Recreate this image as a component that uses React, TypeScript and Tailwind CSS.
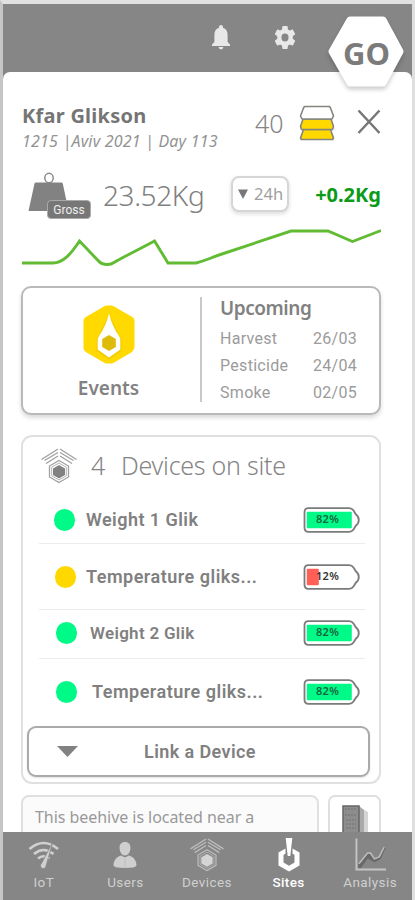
import type { ReactNode } from 'react';

interface Device {
  id: number;
  name: string;
  battery: number;
  dotClass: string;
  rowClass: string;
  nameClass: string;
}

interface NavItem {
  label: string;
  icon: ReactNode;
  active?: boolean;
}

const devices: Device[] = [
  {
    id: 1,
    name: 'Weight 1 Glik',
    battery: 82,
    dotClass: 'ml-[15px] bg-[#00fa87]',
    rowClass: 'h-[50px] border-b pt-[2px]',
    nameClass: 'ml-[11px] text-[18px] tracking-[0.45px]',
  },
  {
    id: 2,
    name: 'Temperature gliks...',
    battery: 12,
    dotClass: 'ml-4 bg-[#ffd800]',
    rowClass: 'h-[66px] border-b',
    nameClass: 'ml-[10px] text-[18px] tracking-[0.5px]',
  },
  {
    id: 3,
    name: 'Weight 2 Glik',
    battery: 82,
    dotClass: 'ml-[17px] bg-[#00fa87]',
    rowClass: 'h-[49px] border-b pb-[2px]',
    nameClass: 'ml-[13px] text-[17px] tracking-[0.3px]',
  },
  {
    id: 4,
    name: 'Temperature gliks...',
    battery: 82,
    dotClass: 'ml-[17px] bg-[#00fa87]',
    rowClass: 'h-[67px] pb-[2px]',
    nameClass: 'ml-[15px] text-[18px] tracking-[0.5px]',
  },
];

const upcoming = [
  { label: 'Harvest', date: '26/03' },
  { label: 'Pesticide', date: '24/04' },
  { label: 'Smoke', date: '02/05' },
];

function BellIcon() {
  return (
    <svg width="20" height="26" viewBox="0 0 20 26" fill="#e8e8e8">
      <path d="M10 1c1.200 0 2 .9 2 2v.7c3 .9 4.600 3.600 4.600 7V18l2.400 2.500V22H1v-1.500L3.400 18v-7.300c0-3.400 1.600-6.100 4.600-7V3c0-1.100.8-2 2-2Z" />
      <path d="M7.700 23h4.600c0 1.400-1 2.300-2.300 2.300S7.700 24.400 7.700 23Z" />
    </svg>
  );
}

function GearIcon() {
  return (
    <svg width="26" height="29" viewBox="0 0 24 24" preserveAspectRatio="none" fill="#e8e8e8">
      <path d="M19.140 12.940c.04-.3.060-.61.060-.94 0-.32-.02-.64-.070-.94l2.030-1.580c.18-.14.23-.41.120-.61l-1.920-3.320c-.12-.22-.37-.29-.59-.22l-2.390.96c-.5-.38-1.030-.7-1.620-.94l-.36-2.540c-.04-.24-.24-.41-.48-.41h-3.840c-.24 0-.43.17-.47.41l-.36 2.540c-.59.24-1.130.57-1.620.94l-2.390-.96c-.22-.08-.47 0-.59.22L2.740 8.870c-.12.21-.08.47.12.61l2.030 1.580c-.05.3-.09.63-.09.94s.02.64.070.94l-2.030 1.580c-.18.14-.23.41-.12.61l1.920 3.320c.12.22.37.29.59.22l2.390-.96c.5.38 1.030.7 1.620.94l.36 2.540c.05.24.24.41.48.41h3.840c.24 0 .44-.17.47-.41l.36-2.540c.59-.24 1.130-.56 1.620-.94l2.390.96c.22.08.47 0 .59-.22l1.920-3.320c.12-.22.070-.47-.12-.61l-2.010-1.580ZM12 15.300A3.300 3.300 0 1 1 12 8.700a3.300 3.300 0 0 1 0 6.600Z" />
    </svg>
  );
}

function HiveIcon() {
  return (
    <svg width="36" height="36" viewBox="0 0 36 36" stroke="#858580" strokeWidth="1.600" strokeLinejoin="round">
      <path d="M4.500 24.500h27l3 8.500-.8 1.500H2.300L1.500 33Z" fill="#ffd800" />
      <path d="M4 14h28l2.500 7.500-1 3h-31l-1-3Z" fill="#ffd800" />
      <path d="M5.500 1.500h25L31.500 3l3 8-1.500 3H3l-1.500-3 3-8Z" fill="#fff" />
    </svg>
  );
}

function CloseIcon() {
  return (
    <svg width="24" height="26" viewBox="0 0 24 26" stroke="#777" strokeWidth="2.500">
      <path d="M1.500 1.500 22.500 24M22.500 1.500 1.500 24" />
    </svg>
  );
}

function WeightIcon() {
  return (
    <svg width="40" height="40" viewBox="0 0 40 40">
      <ellipse cx="21" cy="6" rx="4.200" ry="4.700" fill="none" stroke="#8b8b8b" strokeWidth="1.500" />
      <path d="M8 10.500h25q1.500 0 1.800 1L40.500 39H.5l6-27.500q.2-1 1.500-1Z" fill="#828282" />
    </svg>
  );
}

function WeightChart() {
  return (
    <svg width="359" height="44" viewBox="0 0 359 44" fill="none" stroke="#61bc34" strokeWidth="2.900">
      <path d="M0 37h31c10 0 18-9 26.500-22L76 34.500c4 5 12 5 16 2 10-6 23-12 40.500-21.500l13.500 22H174C184 34.500 188 32 200 28L269 5h37l24.500 10.500L359 4.500" />
    </svg>
  );
}

function EventsIcon() {
  return (
    <svg width="54" height="62" viewBox="0 0 54 62">
      <path
        d="M25 6h4L48 17v4 22l-1 1.500L29 55h-4L6 44V17Z"
        fill="#ffd900"
        stroke="#ffd900"
        strokeWidth="9"
        strokeLinejoin="round"
      />
      <path d="M27 10 39.500 36V47L27 56 14.500 47V36Z" fill="#d9b600" opacity=".35" />
      <path
        d="M27 9.500Q30 22 37 32q1.300 2 1.300 4v9.500L27 53.500 15.700 45.500V36q0-2 1.300-4Q24 22 27 9.500Z"
        fill="#fff"
      />
      <path d="M27 31 33.800 35v8L27 47l-6.800-4v-8Z" fill="#dfbb09" />
    </svg>
  );
}

function SensorIcon({ color, core, size = 'h-9 w-9' }: { color: string; core: string; size?: string }) {
  return (
    <svg className={size} viewBox="0 0 36 36" fill="none" stroke={color} strokeWidth="1.300">
      <path d="M.5 11.500 17 1M3.500 12.500 17 4.500M5 15.500 17 8M19 1l16.500 10.500M19 4.500l13.500 8M19 8l12 7.500" />
      <path d="M18 12.500 27.500 18v11L18 34.500 8.500 29V18Z" />
      <path d="M18 15 25.300 19.200v8.600L18 32l-7.300-4.200v-8.600Z" strokeWidth=".8" />
      <path d="M18 17 24 20.500v6.600L18 30.500l-6-3.400v-6.600Z" fill={core} stroke="none" />
    </svg>
  );
}

function Battery({ level }: { level: number }) {
  const low = level < 20;
  return (
    <div className="relative h-[26px] w-[57px]">
      <svg width="57" height="26" viewBox="0 0 57 26" fill="none">
        <path
          d="M5.500 1.200H46q3 0 4.500 2.300l2.500 4q2.800 2 2.800 5.500t-2.800 5.500l-2.500 4q-1.500 2.300-4.500 2.300H5.500q-4 0-4-4v-15.600q0-4 4-4Z"
          fill="#fff"
          stroke="#7b7b7b"
          strokeWidth="1.800"
        />
        <rect x="3.800" y="4.800" width={low ? 12 : 45} height="16.500" rx="1" fill={low ? '#ff5f55' : '#00fa87'} />
      </svg>
      <span
        className={`absolute top-[5px] left-[13px] font-['Noto_Sans'] text-[11px] leading-[13px] font-semibold tracking-[0.3px] ${
          low ? 'text-[#333]' : 'text-[#17643f]'
        }`}
      >
        {level}%
      </span>
    </div>
  );
}

function DeviceRow({ device }: { device: Device }) {
  return (
    <div className={`mr-[9px] ml-[11px] flex shrink-0 items-center border-[#ececec] ${device.rowClass}`}>
      <span className={`h-[22px] w-[21px] shrink-0 rounded-full ${device.dotClass}`} />
      <span className={`leading-6 font-semibold whitespace-nowrap text-[#808080] ${device.nameClass}`}>
        {device.name}
      </span>
      <div className="mr-[5px] ml-auto">
        <Battery level={device.battery} />
      </div>
    </div>
  );
}

const navItems: NavItem[] = [
  {
    label: 'IoT',
    icon: (
      <svg width="32" height="30" viewBox="0 0 32 30" fill="none" stroke="#d0d0d0" strokeWidth="2.600">
        <path d="M1.500 9Q15.500-3 30 9M6 14q9.500-8 19.500 0M10 18.500q5.500-4.500 11.500 0" />
        <path d="M25 1.500 13.500 23.500a2.800 2.800 0 1 0 4.500 2.500Z" fill="#d0d0d0" stroke="#868686" strokeWidth=".8" />
      </svg>
    ),
  },
  {
    label: 'Users',
    icon: (
      <svg width="24" height="28" viewBox="0 0 24 28" fill="#cfcfcf">
        <path d="M12 1c3.800 0 5.800 2.600 5.400 6.500-.3 3.800-2.400 7-5.400 7s-5.100-3.200-5.400-7C6.200 3.600 8.200 1 12 1Z" />
        <path d="M8.500 14.500Q12 18 15.500 14.500c5 1 8 5 8 10Q23 27 12 27T.5 24.500c0-5 3-9 8-10Z" />
        <path d="M12 17v9.500" stroke="#bdbdbd" />
      </svg>
    ),
  },
  { label: 'Devices', icon: <SensorIcon color="#bdbdbd" core="#d5d5d5" size="h-[34px] w-[34px]" /> },
  {
    label: 'Sites',
    active: true,
    icon: (
      <svg width="24" height="36" viewBox="0 0 24 36">
        <path
          fillRule="evenodd"
          fill="#fff"
          d="M8.500 11.500 1.500 15.500v13L12 34.500l10.500-6v-13l-7-4v5L17.500 18v7.500L12 28.700l-5.500-3.200V18l2-1.500Z"
        />
        <path d="M8.700 1h6.600l-2 18h-2.600Z" fill="#fff" />
      </svg>
    ),
  },
  {
    label: 'Analysis',
    icon: (
      <svg width="31" height="34" viewBox="0 0 32 34" fill="none">
        <path d="M1.500 0v32H32" stroke="#c4c4c4" strokeWidth="2" />
        <path d="M4 30v-4l9-11 7 6 5-2 6-9-5 11-6 3-7-4-7 10Z" fill="#686868" stroke="#686868" />
        <path d="M4 26 13 15h3l4 6 5-2 5-10" stroke="#bdbdbd" strokeWidth="1.600" />
      </svg>
    ),
  },
];

function BottomNav() {
  return (
    <nav className="flex h-[68px] shrink-0 bg-[#868686] pr-px">
      {navItems.map((item) => (
        <button key={item.label} className="flex flex-1 flex-col items-center">
          <span className="flex h-[42px] items-center justify-center pt-[3px]">{item.icon}</span>
          <span
            className={`text-[13.500px] leading-4 tracking-[0.4px] ${
              item.active ? 'font-medium text-white' : 'text-[#cfcfcf]'
            }`}
          >
            {item.label}
          </span>
        </button>
      ))}
    </nav>
  );
}

export default function App() {
  return (
    <div className="flex h-[900px] w-[415px] flex-col overflow-hidden border-t-[4px] border-r-[3px] border-l-[3px] border-t-[#e1e1e1] border-r-[#dfdfdf] border-l-[#c6c6c6] bg-[#868686] font-[Roboto,sans-serif]">
      <header className="relative flex h-[68px] shrink-0 items-start">
        <div className="mt-[20px] ml-[208px]">
          <BellIcon />
        </div>
        <div className="mt-[19px] ml-[41px]">
          <GearIcon />
        </div>
        {/* Logo hangs over the sheet below the bar */}
        <div className="absolute top-[10px] left-[322px] z-10 h-[84px] w-[82px]">
          <svg className="absolute inset-0 drop-shadow-[0_3px_2px_rgba(0,0,0,0.2)]" width="82" height="76" viewBox="0 0 82 76">
            <path
              d="M25 6H58L75 37.500 58 69H25L7 37.500Z"
              fill="#fff"
              stroke="#fff"
              strokeWidth="7"
              strokeLinejoin="round"
            />
          </svg>
          <span className="relative block pl-px text-center font-['Noto_Sans'] text-[31px] leading-[78px] font-bold text-[#7b7b7b]">
            GO
          </span>
        </div>
      </header>

      <main className="flex h-[760px] shrink-0 flex-col overflow-hidden rounded-t-[7px] bg-white pr-[31px] pl-[18px] text-[#858585]">
        <section className="flex h-[84px] shrink-0 items-start">
          <div className="w-[233px] shrink-0 pt-[31px] pl-px font-['Noto_Sans']">
            <h1 className="text-[20px] leading-[26px] font-bold tracking-[0.25px] whitespace-nowrap text-[#757575]">
              Kfar Glikson
            </h1>
            <p className="text-[16px] leading-[25px] tracking-[0.2px] whitespace-nowrap text-[#939393] italic">
              1215 |Aviv 2021 | Day 113
            </p>
          </div>
          <span className="w-[45px] shrink-0 pt-[34px] pl-px font-['Noto_Sans'] text-[25px] leading-[34px] font-light">
            40
          </span>
          <div className="mt-[33px]">
            <HiveIcon />
          </div>
          <button className="mt-[37px] ml-[22px]">
            <CloseIcon />
          </button>
        </section>

        <section className="flex h-[68px] shrink-0 items-start">
          <div className="relative h-[50px] w-[82px] shrink-0 pt-[16px] pl-[7px]">
            <WeightIcon />
            <span className="absolute top-[44px] left-[26px] flex h-[19px] w-[44px] items-center justify-center rounded-[4px] border border-[#aaa] bg-[#777] text-[12px] leading-none text-[#eee]">
              Gross
            </span>
          </div>
          <span className="w-[128px] shrink-0 pt-[20px] font-['Noto_Sans'] text-[28px] leading-[38px] font-light tracking-[-0.4px] whitespace-nowrap text-[#808080]">
            23.52Kg
          </span>
          <button className="mt-[20px] flex h-[36px] w-[58px] shrink-0 items-center rounded-[8px] border-2 border-[#d6d6d6] bg-white pl-[5px] shadow-[0_2px_4px_rgba(0,0,0,0.14)]">
            <svg width="10" height="10" viewBox="0 0 10 10" fill="#777">
              <path d="M0 .5h10L5 10Z" />
            </svg>
            <span className="ml-[6px] font-['Noto_Sans'] text-[16.5px] text-[#a0a0a0]">24h</span>
          </button>
          <span className="ml-auto pt-[24px] font-['Noto_Sans'] text-[20px] leading-[30px] font-bold whitespace-nowrap text-[#0a9b18]">
            +0.2Kg
          </span>
        </section>

        <div className="h-[62px] shrink-0 pt-[2px] pl-px">
          <WeightChart />
        </div>

        <section className="flex h-[129px] shrink-0 rounded-[10px] border-2 border-[#b9b9b9] bg-white shadow-[0_3px_4px_rgba(0,0,0,0.14)]">
          <div className="flex w-[177px] shrink-0 flex-col items-center pt-[16px] pr-[6px]">
            <EventsIcon />
            <span className="mt-[9px] font-['Noto_Sans'] text-[19px] leading-[26px] font-semibold text-[#828282]">
              Events
            </span>
          </div>
          <div className="mt-[9px] h-[105px] w-[2px] shrink-0 bg-[#c9c9c9]" />
          <div className="flex-1 pt-[7px] pr-[22px] pl-[18px]">
            <h2 className="font-['Noto_Sans'] text-[19px] leading-[26px] font-semibold tracking-[-0.45px] text-[#818181]">
              Upcoming
            </h2>
            <ul className="pt-[4px]">
              {upcoming.map((entry) => (
                <li
                  key={entry.label}
                  className="flex h-[27.3px] items-center justify-between text-[16px] tracking-[0.3px] text-[#9b9b9b]"
                >
                  <span>{entry.label}</span>
                  <span>{entry.date}</span>
                </li>
              ))}
            </ul>
          </div>
        </section>

        <section className="mt-[20px] flex h-[349px] shrink-0 flex-col rounded-[11px] border-2 border-[#e0e0e0] px-[5px] pb-[6px]">
          <div className="flex h-[57px] shrink-0 items-center pl-[13px] font-['Noto_Sans'] text-[25px] font-light text-[#858585]">
            <SensorIcon color="#a0a0a0" core="#818181" />
            <span className="w-[30px] pl-[14px]">4</span>
            <span className="ml-[14px] tracking-[-0.25px] whitespace-nowrap">Devices on site</span>
          </div>
          {devices.map((device) => (
            <DeviceRow key={device.id} device={device} />
          ))}
          <button className="mr-[4px] ml-[-1px] flex h-[51px] shrink-0 items-center rounded-[9px] border-2 border-[#aaa] bg-white pl-[28px] shadow-[0_1px_2px_rgba(0,0,0,0.12)]">
            <svg width="21" height="11" viewBox="0 0 21 11" fill="#828282">
              <path d="M0 0h21L10.500 11Z" />
            </svg>
            <span className="ml-[66px] text-[18px] font-semibold tracking-[0.4px] text-[#808080]">Link a Device</span>
          </button>
        </section>

        <section className="mt-[11px] flex shrink-0 items-start gap-[9px]">
          <p className="h-[64px] w-[298px] rounded-[8px] border-2 border-[#e0e0e0] bg-[#fbfbfb] pt-[8px] pl-[12px] font-['Noto_Sans'] text-[16px] leading-[24px] tracking-[-0.05px] text-[#999]">
            This beehive is located near a
          </p>
          <div className="flex h-[64px] w-[53px] justify-center rounded-[7px] border-2 border-[#dfdfdf] pt-[8px]">
            <svg width="26" height="32" viewBox="0 0 26 32">
              <path d="M17 2 26 7v25H17Z" fill="#d5d5d5" />
              <path d="M17 1 22 5v27H17Z" fill="#aaa" />
              <path d="M1 1h16v30H1Z" fill="#8d8d8d" stroke="#666" strokeWidth="1.500" />
              <path d="M3 4h12M3 10h12M4 15h10M4 19h10M4 23h10" stroke="#707070" strokeDasharray="2 1" />
            </svg>
          </div>
        </section>
      </main>

      <BottomNav />
    </div>
  );
}
